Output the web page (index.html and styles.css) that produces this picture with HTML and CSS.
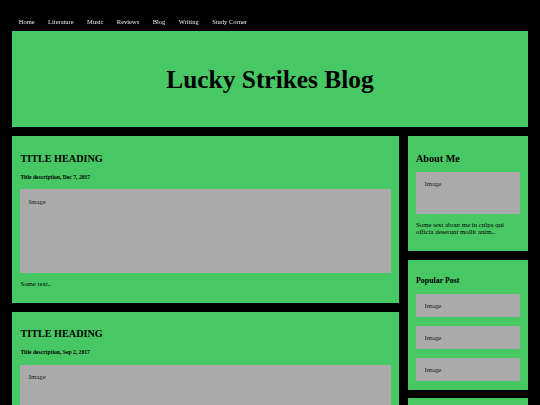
FILE: index.html
```html
<!DOCTYPE html>
<html>
<head>
<meta charset="utf-8">
<title>Lucky Strikes Blog</title>
<link rel="stylesheet" href="styles.css">
</head>
<body>
<nav class="topnav">
  <a href="#">Home</a>
  <a href="#">Literature</a>
  <a href="#">Music</a>
  <a href="#">Reviews</a>
  <a href="#">Blog</a>
  <a href="#">Writing</a>
  <a href="#">Study Corner</a>
</nav>
<header class="header">
  <h1>Lucky Strikes Blog</h1>
</header>
<div class="row">
  <div class="leftcolumn">
    <div class="card">
      <h2>TITLE HEADING</h2>
      <h5>Title description, Dec 7, 2017</h5>
      <div class="fakeimg fakeimg-large">Image</div>
      <p>Some text..</p>
    </div>
    <div class="card">
      <h2>TITLE HEADING</h2>
      <h5>Title description, Sep 2, 2017</h5>
      <div class="fakeimg fakeimg-large">Image</div>
      <p>Some text..</p>
    </div>
  </div>
  <div class="rightcolumn">
    <div class="card">
      <h2 class="about-title">About Me</h2>
      <div class="fakeimg fakeimg-medium">Image</div>
      <p>Some text about me in culpa qui officia deserunt mollit anim..</p>
    </div>
    <div class="card">
      <h3>Popular Post</h3>
      <div class="posts">
        <div class="fakeimg fakeimg-small">Image</div>
        <div class="fakeimg fakeimg-small">Image</div>
        <div class="fakeimg fakeimg-small">Image</div>
      </div>
    </div>
    <div class="card">
      <h3>Follow Me</h3>
      <p>Some text..</p>
    </div>
  </div>
</div>
</body>
</html>
```
FILE: styles.css
```css
* {
  box-sizing: border-box;
}

html {
  background: #000;
}

body {
  margin: 0;
  padding: 12px;
  background: #000;
  font-family: "Liberation Serif", "Times New Roman", serif;
  font-size: 6.8px;
  line-height: 7.73px;
  color: #000;
}

.topnav {
  display: flex;
  background: #000;
  will-change: transform;
}

.topnav a {
  display: block;
  color: #eeeeee;
  text-decoration: none;
  padding: 5.88px 6.72px;
  font-size: 6.5px;
}

.header {
  background: #48c864;
  padding: 16.6px;
  text-align: center;
}

.header h1 {
  font-size: 25.4px;
  line-height: 29px;
  margin: 16.9px 0;
  font-weight: bold;
}

.row {
  display: flex;
  align-items: flex-start;
}

.leftcolumn {
  width: 75%;
}

.rightcolumn {
  width: 25%;
  padding-left: 8.6px;
}

.card {
  background: #48c864;
  padding: 8.4px;
  margin-top: 8.6px;
}

.card h2 {
  font-size: 10.2px;
  line-height: 11.6px;
  margin: 8.37px 0;
}

.card .about-title {
  margin-bottom: 7.4px;
}

.card h3 {
  font-size: 7.9px;
  line-height: 9.04px;
  margin: 8.1px 0 8.5px;
}

.card h5 {
  font-size: 5.65px;
  line-height: 6.42px;
  margin: 9.3px 0;
}

.card p {
  margin: 6.72px 0;
}

.fakeimg {
  background: #aaa;
  color: #222;
  padding: 8.4px;
  width: 100%;
}

.fakeimg-large {
  height: 84px;
}

.fakeimg-medium {
  height: 42px;
}

.fakeimg-small {
  height: 23.7px;
  padding: 8px 8.4px;
}

.posts {
  display: flex;
  flex-direction: column;
  gap: 8.3px;
}
```
